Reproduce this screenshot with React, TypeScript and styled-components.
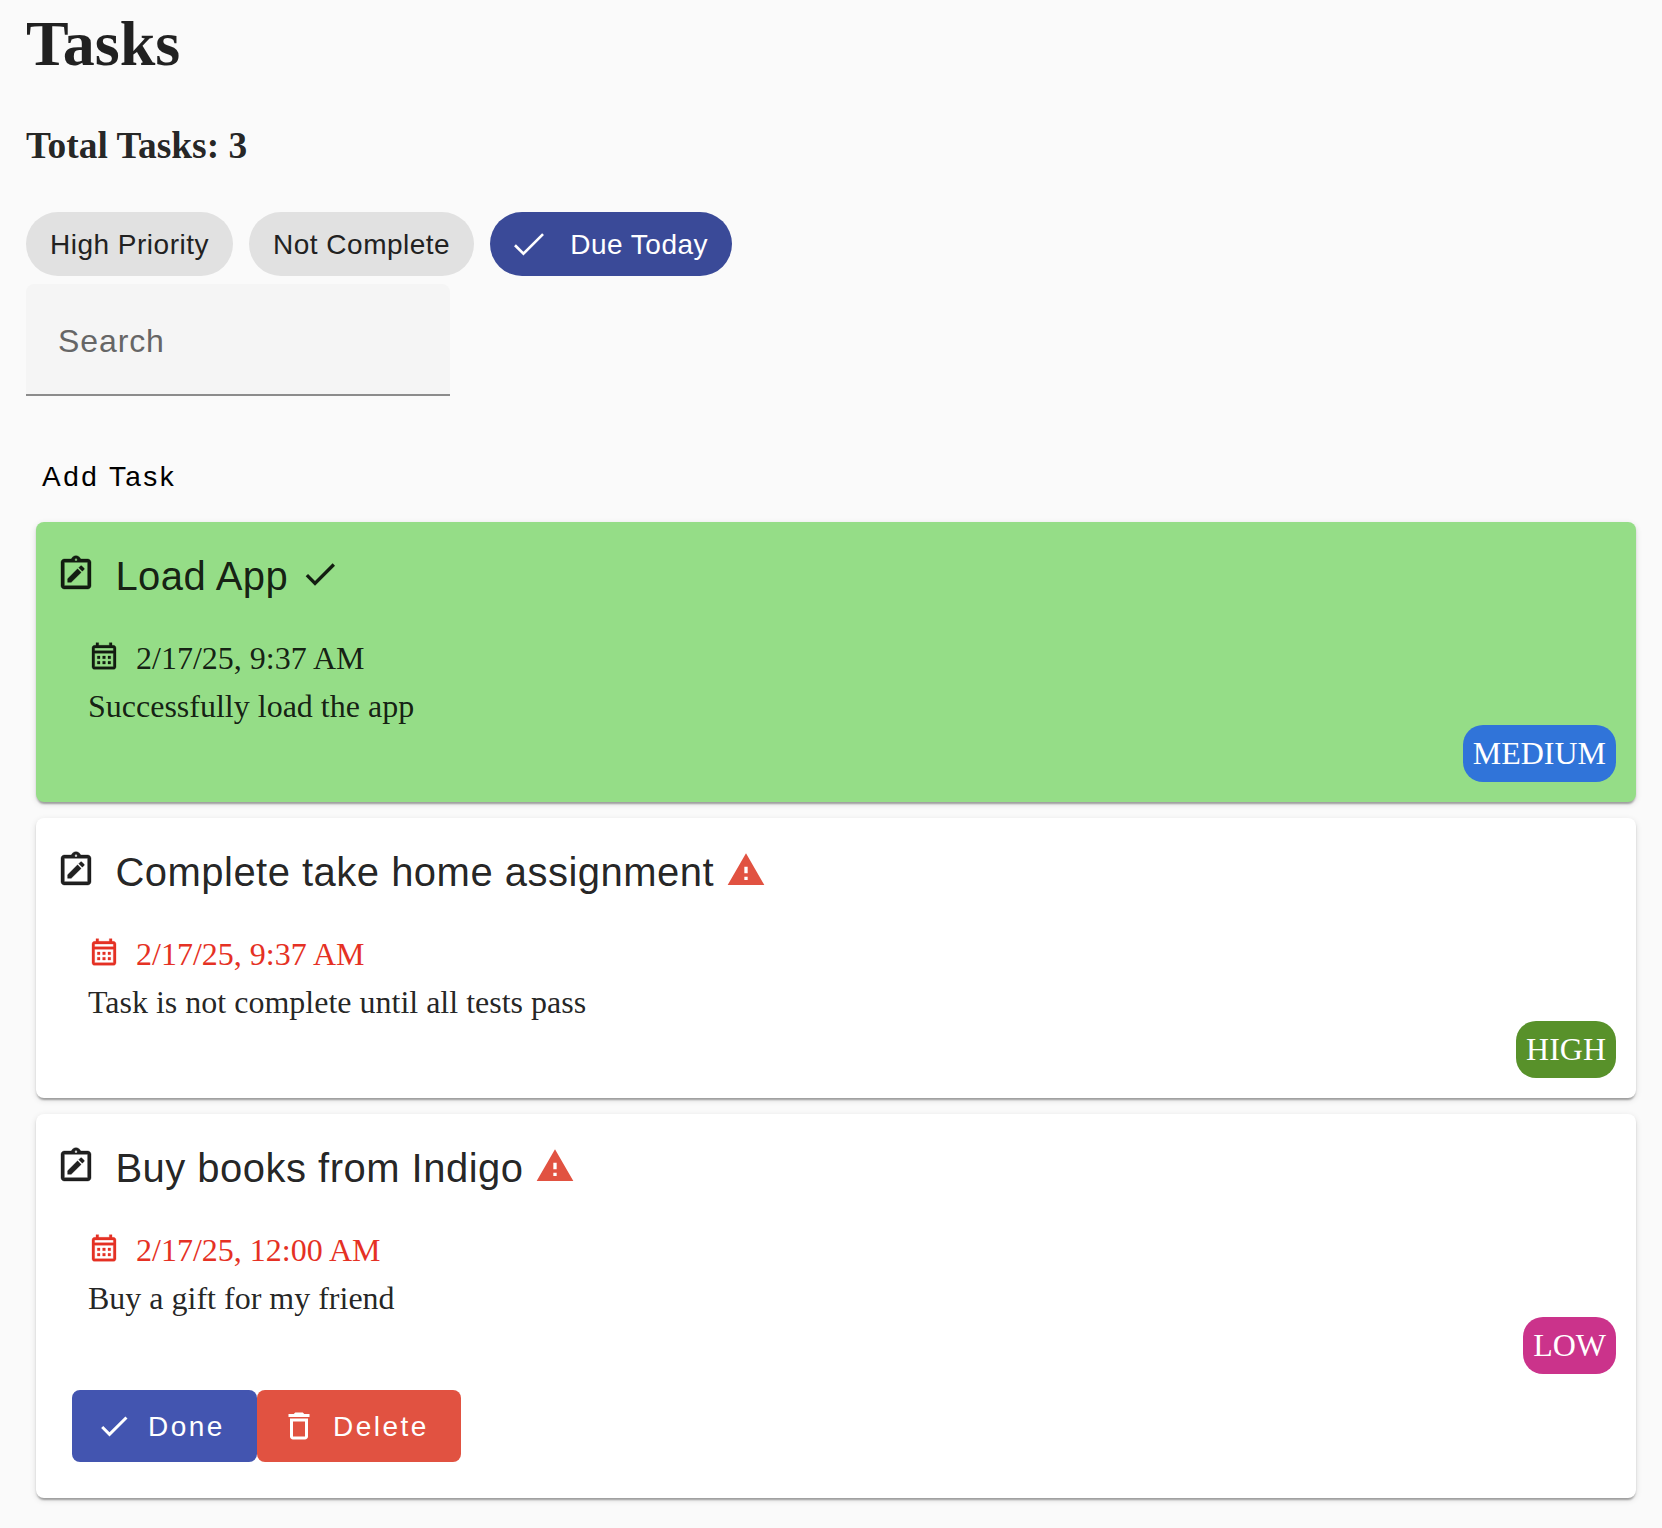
import React from "react";
import styled, { createGlobalStyle } from "styled-components";
import { MdCheck, MdDeleteOutline, MdWarning } from "react-icons/md";

const sans = `"Liberation Sans", Arial, Helvetica, sans-serif`;
const serif = `"Liberation Serif", "Times New Roman", Times, serif`;

const GlobalStyle = createGlobalStyle`
  * { box-sizing: border-box; }
  body {
    margin: 0;
    background: #fafafa;
    color: rgba(0, 0, 0, 0.87);
    font: 32px/37px ${serif};
  }
  svg { display: block; flex: none; }
`;

const Page = styled.main`
  min-height: 1528px;
  padding: 7px 26px 30px;
  display: flex;
  flex-direction: column;
  align-items: flex-start;
`;

const Heading = styled.h1`
  margin: 0 0 43px;
  font-size: 64px;
  line-height: 74px;
`;

const Total = styled.h3`
  margin: 0 0 44px;
  font-size: 37.44px;
  line-height: 44px;
`;

const Filters = styled.div`
  display: flex;
  gap: 16px;
`;

const Chip = styled.button<{ $selected?: boolean }>`
  height: 64px;
  padding: 2px 24px 0 ${(p) => (p.$selected ? "20px" : "24px")};
  display: flex;
  align-items: center;
  gap: 20px;
  border: 0;
  border-radius: 32px;
  background: ${(p) => (p.$selected ? "#3a4a98" : "#e1e1e1")};
  color: ${(p) => (p.$selected ? "#fff" : "#212121")};
  font: 28px/40px ${sans};
  letter-spacing: 0.5px;
  white-space: nowrap;

  svg {
    margin-top: -2px;
  }
`;

const SearchField = styled.input`
  width: 424px;
  height: 112px;
  margin: 8px 0 44px;
  padding: 4px 32px 0;
  border: 0;
  border-bottom: 2px solid #8c8c8c;
  border-radius: 8px 8px 0 0;
  background: #f5f5f5;
  font: 32px/48px ${sans};
  letter-spacing: 0.9px;
  &::placeholder {
    color: #666;
    opacity: 1;
  }
`;

const TextButton = styled.button`
  height: 72px;
  margin-bottom: 10px;
  padding: 2px 16px 0;
  border: 0;
  background: transparent;
  color: #000;
  font: 28px/40px ${sans};
  letter-spacing: 2.45px;
`;

const TaskList = styled.div`
  margin: 0 0 0 10px;
  width: 1600px;
  display: flex;
  flex-direction: column;
  gap: 16px;
`;

const Card = styled.article<{ $done?: boolean }>`
  padding: 22px 20px 20px;
  display: flex;
  flex-direction: column;
  border-radius: 8px;
  background: ${(p) => (p.$done ? "#95dd87" : "#fff")};
  box-shadow:
    0 4px 2px -2px rgba(0, 0, 0, 0.2),
    0 2px 2px 0 rgba(0, 0, 0, 0.14),
    0 2px 6px 0 rgba(0, 0, 0, 0.12);
`;

const TitleRow = styled.header`
  height: 64px;
  margin-bottom: 32px;
  padding-top: 10px;
  display: flex;
  align-items: flex-start;
`;

const Title = styled.h2`
  margin: -10px 12px 0 19.4px;
  font: 400 40px/64px ${sans};
  letter-spacing: 0.48px;
`;

const Due = styled.div<{ $overdue: boolean }>`
  margin: 0 32px 11px;
  display: flex;
  align-items: flex-start;
  gap: 16px;
  color: ${(p) => (p.$overdue ? "#e53124" : "inherit")};
`;

const Description = styled.p`
  margin: 0 32px;
`;

const Badge = styled.span<{ $color: string }>`
  align-self: flex-end;
  padding: 10px;
  border-radius: 20px;
  background: ${(p) => p.$color};
  color: #fff;
`;

const Actions = styled.footer`
  margin: 16px 16px;
  display: flex;
`;

const ActionButton = styled.button<{ $color: string }>`
  height: 72px;
  padding: 2px 32px 0 24px;
  display: flex;
  align-items: center;
  gap: 16px;
  border: 0;
  border-radius: 8px;
  background: ${(p) => p.$color};
  color: #fff;
  font: 28px/40px ${sans};
  letter-spacing: 2.5px;

  svg {
    margin-top: -2px;
  }
`;

const Glyph = styled.svg.attrs({ viewBox: "0 0 24 24" })`
  fill: #212121;
  fill: currentColor;
  fill-rule: evenodd;
  stroke: currentColor;
  stroke-width: 0.22;
`;

const ChipCheck = () => (
  <svg width="40" height="40" viewBox="-2 -3 30 30" fill="none" stroke="#fff" strokeWidth="2">
    <path d="M1.73,12.91 8.1,19.28 22.79,4.59" />
  </svg>
);

const NoteIcon = () => (
  <Glyph width="40" height="40">
    <path d="M19 3h-4.18C14.4 1.84 13.3 1 12 1s-2.4.84-2.82 2H5c-1.1 0-2 .9-2 2v14c0 1.1.9 2 2 2h14c1.1 0 2-.9 2-2V5c0-1.1-.9-2-2-2zm-7-.25c.41 0 .75.34.75.75s-.34.75-.75.75-.75-.34-.75-.75.34-.75.75-.75zM19 19H5V5h14v14z" />
    <path d="M15.08 11.03l-2.12-2.12L7 14.86V17h2.1zM16.85 9.27c.2-.2.2-.51 0-.71l-1.41-1.41c-.2-.2-.51-.2-.71 0l-1.06 1.06 2.12 2.12 1.06-1.06z" />
  </Glyph>
);

const CalendarIcon = () => (
  <Glyph width="32" height="32">
    <path d="M19 4h-1V2h-2v2H8V2H6v2H5c-1.11 0-1.99.9-1.99 2L3 20c0 1.1.89 2 2 2h14c1.1 0 2-.9 2-2V6c0-1.1-.9-2-2-2zm0 16H5V10h14v10zm0-12H5V6h14v2z" />
    <path d="M7 12h2v2H7zM11 12h2v2h-2zM15 12h2v2h-2zM7 16h2v2H7zM11 16h2v2h-2zM15 16h2v2h-2z" />
  </Glyph>
);

type Priority = "LOW" | "MEDIUM" | "HIGH";

const priorityColor: Record<Priority, string> = {
  LOW: "#cb338b",
  MEDIUM: "#3074d9",
  HIGH: "#58912a",
};

interface Task {
  title: string;
  due: string;
  description: string;
  priority: Priority;
  done?: boolean;
  actions?: boolean;
}

const tasks: Task[] = [
  {
    title: "Load App",
    due: "2/17/25, 9:37 AM",
    description: "Successfully load the app",
    priority: "MEDIUM",
    done: true,
  },
  {
    title: "Complete take home assignment",
    due: "2/17/25, 9:37 AM",
    description: "Task is not complete until all tests pass",
    priority: "HIGH",
  },
  {
    title: "Buy books from Indigo",
    due: "2/17/25, 12:00 AM",
    description: "Buy a gift for my friend",
    priority: "LOW",
    actions: true,
  },
];

const TaskCard = ({ task }: { task: Task }) => (
  <Card $done={task.done}>
    <TitleRow>
      <NoteIcon />
      <Title>{task.title}</Title>
      {task.done ? <MdCheck size={40} /> : <MdWarning size={40} color="#e15241" />}
    </TitleRow>
    <Due $overdue={!task.done}>
      <CalendarIcon />
      <span>{task.due}</span>
    </Due>
    <Description>{task.description}</Description>
    <Badge $color={priorityColor[task.priority]}>{task.priority}</Badge>
    {task.actions && (
      <Actions>
        <ActionButton $color="#4355b0">
          <MdCheck size={36} />
          Done
        </ActionButton>
        <ActionButton $color="#e15241">
          <MdDeleteOutline size={36} />
          Delete
        </ActionButton>
      </Actions>
    )}
  </Card>
);

export default function App() {
  return (
    <>
      <GlobalStyle />
      <Page>
        <Heading>Tasks</Heading>
        <Total>Total Tasks: {tasks.length}</Total>
        <Filters>
          <Chip>High Priority</Chip>
          <Chip>Not Complete</Chip>
          <Chip $selected>
            <ChipCheck />
            Due Today
          </Chip>
        </Filters>
        <SearchField placeholder="Search" />
        <TextButton>Add Task</TextButton>
        <TaskList>
          {tasks.map((task) => (
            <TaskCard key={task.title} task={task} />
          ))}
        </TaskList>
      </Page>
    </>
  );
}
